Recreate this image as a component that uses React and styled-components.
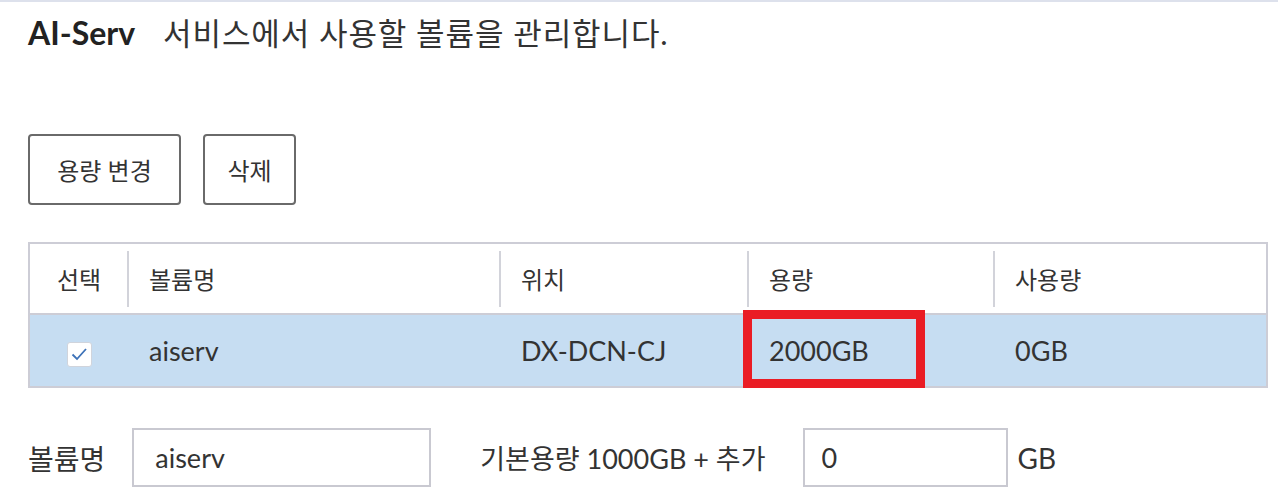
import styled, { createGlobalStyle } from 'styled-components'

const GlobalStyle = createGlobalStyle`
    body {
        margin: 0;
        background: #fff;
        font-family: Lato, "Noto Sans CJK KR", sans-serif;
        color: #333;
    }
`

const Page = styled.div`
    border-top: 2px solid #dde1ec;
    padding: 0 10px 0 28px;
    height: 498px;
    overflow: hidden;
`

const TitleRow = styled.div`
    display: flex;
    align-items: baseline;
    gap: 28px;
    padding-top: 6px;
    height: 50px;
    line-height: 50px;
`

const Title = styled.div`
    font-size: 32px;
    font-weight: 700;
    color: #222;
`

const Desc = styled.div`
    font-size: 31px;
    letter-spacing: 0.9px;
    color: #333;
`

const Toolbar = styled.div`
    display: flex;
    gap: 22px;
    margin-top: 76px;
`

const Button = styled.button`
    height: 71px;
    width: ${p => p.$w}px;
    border: 2px solid #6a6a6a;
    border-radius: 4px;
    background: #fff;
    font-family: Lato, "Noto Sans CJK KR", sans-serif;
    font-size: 24px;
    color: #333;
    padding: 0;
`

const Table = styled.table`
    margin-top: 37px;
    width: 1240px;
    border-collapse: collapse;
    border: 2px solid #cdcdd6;
    table-layout: fixed;
`

const Th = styled.th`
    position: relative;
    height: 69px;
    padding: 0 0 0 ${p => p.$center ? 0 : 21}px;
    text-align: ${p => p.$center ? 'center' : 'left'};
    font-weight: 400;
    font-size: 24px;
    color: #333;
    border-bottom: 2px solid #cdcdd6;

    &::before {
        content: ${p => p.$first ? 'none' : '""'};
        position: absolute;
        left: -1px;
        top: 7px;
        bottom: 6px;
        width: 2px;
        background: #d2d3da;
    }
`

const Row = styled.tr`
    background: #c6ddf2;
`

const Td = styled.td`
    position: relative;
    height: 71px;
    padding: 0 0 0 ${p => p.$center ? 0 : 21}px;
    text-align: ${p => p.$center ? 'center' : 'left'};
    font-size: 27px;
    color: #333;
`

const CheckBox = styled.span`
    display: inline-flex;
    align-items: center;
    justify-content: center;
    width: 23px;
    height: 23px;
    background: #fff;
    border: 1px solid #d0d4dc;
    border-radius: 3px;
    vertical-align: middle;
`

const Highlight = styled.div`
    position: absolute;
    left: -5px;
    top: -5px;
    width: 182px;
    height: 78px;
    box-sizing: border-box;
    border: 9px solid #ea1c24;
    pointer-events: none;
`

const Form = styled.div`
    display: flex;
    align-items: center;
    margin-top: 40px;
`

const Label = styled.span`
    font-size: ${p => p.$fs || 28}px;
    color: #333;
    margin-right: ${p => p.$mr || 0}px;
`

const Input = styled.input`
    box-sizing: border-box;
    width: ${p => p.$w}px;
    height: 59px;
    border: 2px solid #c9c9d1;
    padding: 0 0 0 ${p => p.$pl}px;
    font-family: Lato, "Noto Sans CJK KR", sans-serif;
    font-size: 27px;
    color: #333;
    margin-right: ${p => p.$mr}px;
    outline: none;
`

const Check = () => (
    <svg width="18" height="16" viewBox="0 0 18 16">
        <path d="M2.5 8.5 L7 13 L16 3" fill="none" stroke="#3d72b8" strokeWidth="1.8" />
    </svg>
)

const App = () => {
    return (
        <>
            <GlobalStyle />
            <Page>
                <TitleRow>
                    <Title>AI-Serv</Title>
                    <Desc>서비스에서 사용할 볼륨을 관리합니다.</Desc>
                </TitleRow>

                <Toolbar>
                    <Button $w={153}>용량 변경</Button>
                    <Button $w={93}>삭제</Button>
                </Toolbar>

                <Table>
                    <colgroup>
                        <col style={{ width: 99 }} />
                        <col style={{ width: 372 }} />
                        <col style={{ width: 248 }} />
                        <col style={{ width: 246 }} />
                        <col />
                    </colgroup>
                    <thead>
                        <tr>
                            <Th $first $center>선택</Th>
                            <Th>볼륨명</Th>
                            <Th>위치</Th>
                            <Th>용량</Th>
                            <Th>사용량</Th>
                        </tr>
                    </thead>
                    <tbody>
                        <Row>
                            <Td $center><CheckBox><Check /></CheckBox></Td>
                            <Td>aiserv</Td>
                            <Td>DX-DCN-CJ</Td>
                            <Td>2000GB<Highlight /></Td>
                            <Td>0GB</Td>
                        </Row>
                    </tbody>
                </Table>

                <Form>
                    <Label $mr={27}>볼륨명</Label>
                    <Input $w={299} $mr={49} $pl={21} defaultValue="aiserv" />
                    <Label $fs={27} $mr={37}>기본용량 1000GB + 추가</Label>
                    <Input $w={205} $mr={10} $pl={17} defaultValue="0" />
                    <Label>GB</Label>
                </Form>
            </Page>
        </>
    )
}

export default App
